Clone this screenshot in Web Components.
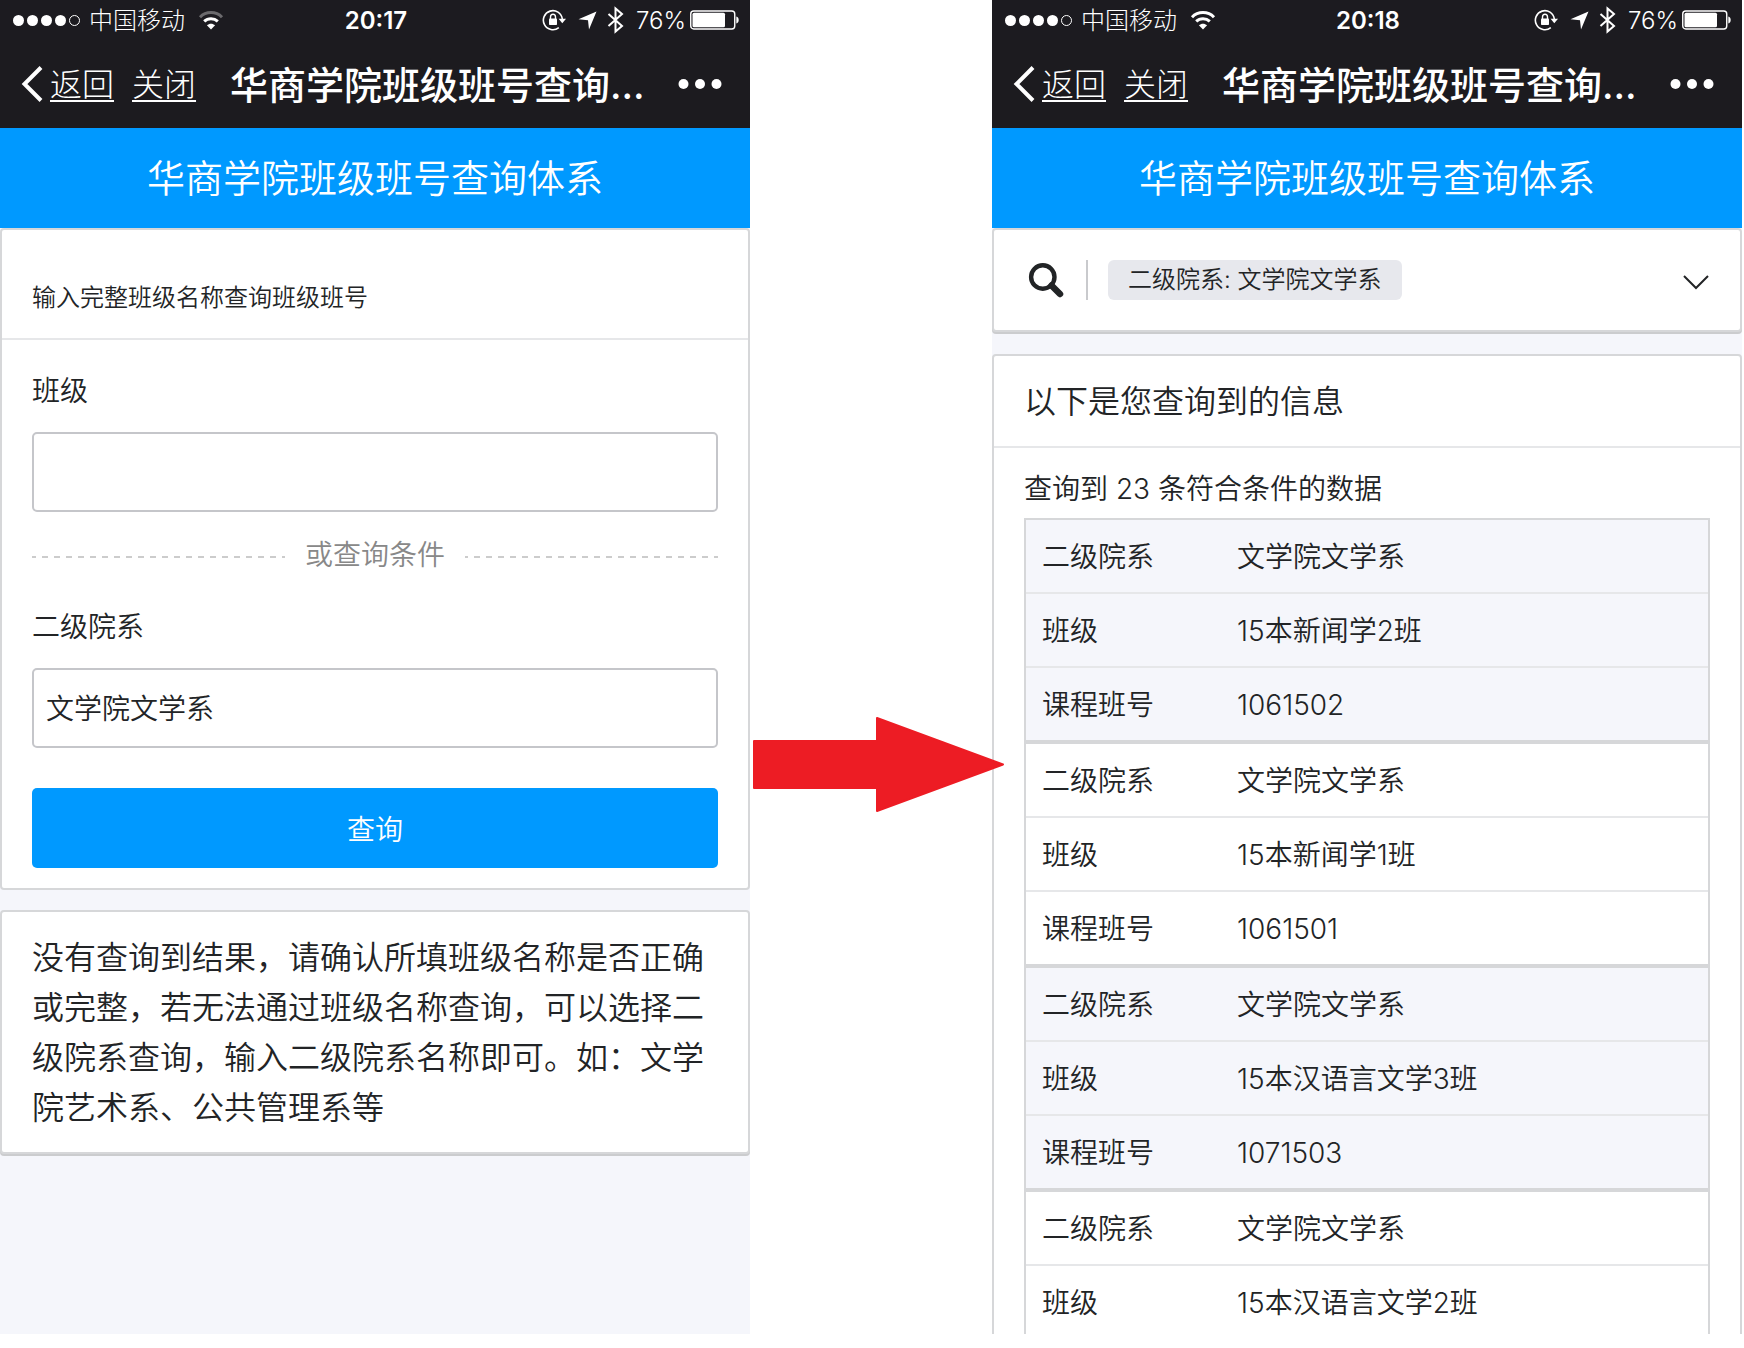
<!DOCTYPE html>
<html lang="zh-CN">
<head>
<meta charset="utf-8">
<title>华商学院班级班号查询体系</title>
<style>
  html, body { height: 100%; }
  body {
    box-sizing: border-box;
    margin: 0;
    padding: 0 2px 14px 0;
    overflow: hidden;
    background: #fff;
    color: #222426;
    font-family: Inter, "Noto Sans CJK SC", sans-serif;
    font-weight: 350;
    --line: #d6d7d9;
    --hair: #e6e7e9;
    --blue: #0099ff;
    --page: #f5f6fb;
  }
</style>
</head>
<body>
<flow-board>
  <phone-screen slot="before">
    <status-bar time="20:17" wifi="weak"></status-bar>
    <nav-bar heading="华商学院班级班号查询…"></nav-bar>
    <page-banner>华商学院班级班号查询体系</page-banner>
    <query-form></query-form>
    <info-card raised><message-text>没有查询到结果，请确认所填班级名称是否正确或完整，若无法通过班级名称查询，可以选择二级院系查询，输入二级院系名称即可。如：文学院艺术系、公共管理系等</message-text></info-card>
  </phone-screen>
  <phone-screen slot="after">
    <status-bar time="20:18"></status-bar>
    <nav-bar heading="华商学院班级班号查询…"></nav-bar>
    <page-banner>华商学院班级班号查询体系</page-banner>
    <info-card raised><filter-bar>二级院系: 文学院文学系</filter-bar></info-card>
    <info-card><result-list></result-list></info-card>
  </phone-screen>
</flow-board>

<script>
const define = (name, markup, fill) => {
  const template = document.createElement('template');
  template.innerHTML = '<style>*{box-sizing:border-box}</style>' + markup;
  customElements.define(name, class extends HTMLElement {
    constructor() {
      super();
      this.attachShadow({ mode: 'open' }).append(template.content.cloneNode(true));
    }
    connectedCallback() { if (fill) fill(this, this.shadowRoot); }
  });
};

define('flow-board', `
<style>
  :host { display: grid; grid-template-columns: 1fr 242px 1fr; height: 100%; }
  .between { position: relative; z-index: 1; }
  .between svg { position: absolute; left: 3px; top: 717px; }
  ::slotted(*) { min-width: 0; }
</style>
<slot name="before"></slot>
<div class="between">
  <svg width="252" height="96" viewBox="0 0 252 96" fill="#ed1c24" stroke="#ed1c24" stroke-width="2" stroke-linejoin="round" aria-hidden="true">
    <path d="M1 24H124V1L250 47.500L124 94V71H1Z"/>
  </svg>
</div>
<slot name="after"></slot>`);

define('phone-screen', `
<style>
  :host { display: block; overflow: hidden; min-height: 0; background: var(--page); }
</style>
<slot></slot>`);

define('status-bar', `
<style>
  :host { display: grid; box-sizing: border-box; grid-template-columns: 1fr auto 1fr; align-items: center; height: 40px;
    padding: 0 10px 0 12px; background: #1c1b20; color: #fff; font-size: 24px; line-height: 36px; }
  svg { display: block; flex: none; }
  span { padding-top: 2px; }
  .left, .right { display: flex; align-items: center; font-weight: 300; }
  .right { justify-content: flex-end; }
  .carrier { margin: 0 13px 0 8px; }
  .time { font-weight: 600; }
  .bt { margin: 0 12px 0 10px; }
  .loc { margin-left: 12px; }
  .battery { margin-left: 4px; }
  :host([wifi="weak"]) .outer { opacity: .35; }
</style>
<div class="left">
  <svg width="69" height="14" viewBox="0 0 69 14" fill="#fff">
    <circle cx="6.500" cy="7.500" r="5.500"/><circle cx="20.500" cy="7.500" r="5.500"/><circle cx="34.500" cy="7.500" r="5.500"/><circle cx="48.500" cy="7.500" r="5.500"/>
    <circle cx="62.500" cy="7.500" r="5" fill="none" stroke="#fff"/>
  </svg>
  <span class="carrier">中国移动</span>
  <svg width="26" height="20" viewBox="0 0 26 20" fill="none" stroke="#fff" stroke-width="3">
    <path class="outer" d="M2 7.200C8 1 18 1 24 7.200"/>
    <path d="M6.200 11.400C10 7.800 16 7.800 19.800 11.400"/>
    <path d="M13 19.500L8.900 15.300C11.300 13.100 14.700 13.100 17.100 15.300Z" fill="#fff" stroke="none"/>
  </svg>
</div>
<span class="time"></span>
<div class="right">
  <svg width="24" height="22" viewBox="0 0 24 22" fill="none" stroke="#fff">
    <path d="M16.800 18.600A9.500 9.500 0 1 1 20.300 10" stroke-width="1.600"/>
    <path d="M16.600 9.800H24L20.300 14.200Z" fill="#fff" stroke="none"/>
    <rect x="7" y="9.500" width="8" height="6.500" rx=".8" fill="#fff" stroke="none"/>
    <path d="M8.500 10V8A2.500 2.800 0 0 1 13.500 8V10" stroke-width="1.400"/>
  </svg>
  <svg class="loc" width="19" height="19" viewBox="0 0 19 19" fill="#fff"><path d="M18.500 .5L11 18.500L10 9.200L.5 8.200Z"/></svg>
  <svg class="bt" width="17" height="28" viewBox="0 0 17 28" fill="none" stroke="#fff" stroke-width="2"><path d="M1.500 8L15 20L8.500 25.500V2.500L15 8L1.500 20"/></svg>
  <span>76%</span>
  <svg class="battery" width="50" height="20" viewBox="0 0 50 20" fill="#fff">
    <rect x=".75" y="1" width="44" height="18" rx="3" fill="none" stroke="#fff" stroke-width="1.400"/>
    <rect x="2.500" y="2.800" width="32.500" height="14.500" rx="1.500"/>
    <path d="M46.300 6.500C49.500 7 49.500 13 46.300 13.500Z"/>
  </svg>
</div>`, (el, root) => { root.querySelector('.time').textContent = el.getAttribute('time'); });

define('nav-bar', `
<style>
  :host { display: flex; box-sizing: border-box; align-items: center; height: 88px; padding: 0 28px 0 21px; background: #1c1b1f; color: #fff; }
  a { padding-top: 2px; color: inherit; font-size: 32px; line-height: 48px; font-weight: 300; text-decoration: underline;
    text-decoration-thickness: 2px; text-underline-offset: 4px; white-space: nowrap; }
  .back { margin: 0 18px 0 7px; }
  h1 { flex: 1; margin: 0 0 0 34px; padding-top: 2px; font-size: 38px; line-height: 56px; font-weight: 500; white-space: nowrap; }
  button { display: block; padding: 0; border: 0; background: none; color: inherit; }
  svg { display: block; flex: none; }
</style>
<svg width="22" height="38" viewBox="0 0 22 38" fill="none" stroke="#fff" stroke-width="4"><path d="M20 2.500L3.500 19L20 35.500"/></svg>
<a class="back" href="#back">返回</a>
<a href="#close">关闭</a>
<h1></h1>
<button type="button" aria-label="更多"><svg width="44" height="12" viewBox="0 0 44 12" fill="#fff"><circle cx="5.500" cy="6" r="5"/><circle cx="22" cy="6" r="5"/><circle cx="38.500" cy="6" r="5"/></svg></button>`,
(el, root) => { root.querySelector('h1').textContent = el.getAttribute('heading'); });

define('page-banner', `
<style>
  :host { display: block; background: var(--blue); color: #fff; font-size: 38px; line-height: 100px; text-align: center; }
</style>
<slot></slot>`);

define('info-card', `
<style>
  :host { display: block; box-sizing: border-box; margin-bottom: 20px; border: 2px solid var(--line); border-radius: 4px; background: #fff; }
  :host([raised]) { margin-bottom: 22px; box-shadow: 0 2px 0 #cbccce; }
</style>
<slot></slot>`);

define('message-text', `
<style>
  :host { display: block; padding: 21px 30px 19px; font-size: 32px; line-height: 50px; }
</style>
<slot></slot>`);

define('query-form', `
<style>
  :host { display: block; }
  header { padding: 50px 30px 22px; border-bottom: 2px solid var(--hair); font-size: 24px; line-height: 36px; }
  form { display: flex; flex-direction: column; padding: 31px 30px 20px; font-size: 28px; }
  label { line-height: 40px; margin-bottom: 21px; }
  input { width: 100%; height: 80px; padding: 0 12px 2px; border: 2px solid #c5c6ca; border-radius: 5px; background: #fff;
    color: inherit; font: inherit; outline: 0; }
  .or { display: flex; align-items: center; gap: 20px; height: 40px; margin: 25px 0 30px; color: #888; }
  .or span { align-self: flex-start; line-height: 36px; }
  .or i { flex: 1; height: 2px; background: repeating-linear-gradient(var(--dir), #ccc 0 4px, transparent 4px 10px, #ccc 10px 12px); }
  .or i:first-child { --dir: 90deg; }
  .or i:last-child { --dir: 270deg; }
  button { height: 80px; margin-top: 40px; padding: 4px 0 0; border: 0; border-radius: 5px; background: var(--blue); color: #fff; font: inherit; line-height: 76px; }
</style>
<info-card>
  <header>输入完整班级名称查询班级班号</header>
  <form>
    <label for="class">班级</label>
    <input id="class" type="text">
    <div class="or"><i></i><span>或查询条件</span><i></i></div>
    <label for="dept">二级院系</label>
    <input id="dept" type="text" value="文学院文学系">
    <button type="button">查询</button>
  </form>
</info-card>`);

define('filter-bar', `
<style>
  :host { display: flex; align-items: center; height: 100px; padding: 0 30px; }
  button { display: block; padding: 0; border: 0; background: none; color: #222426; }
  svg { display: block; }
  .search { margin-left: 4px; }
  .rule { width: 2px; height: 40px; margin: 0 20px 0 22px; background: #c9cacd; }
  .chip { padding: 0 20px; border-radius: 6px; background: #e7e8ed; font-size: 24px; line-height: 40px; white-space: nowrap; }
  .more { margin-left: auto; padding-top: 4px; }
</style>
<button class="search" type="button" aria-label="搜索">
  <svg width="36" height="36" viewBox="0 0 36 36" fill="none" stroke="currentColor"><circle cx="14.800" cy="15" r="11.700" stroke-width="4.400"/><path d="M23.500 23.500L32 32" stroke-width="6.500" stroke-linecap="round"/></svg>
</button>
<span class="rule"></span>
<span class="chip"><slot></slot></span>
<button class="more" type="button" aria-label="展开"><svg width="28" height="16" viewBox="0 0 28 16" fill="none" stroke="currentColor" stroke-width="2"><path d="M2 2L14 14L26 2"/></svg></button>`);

const results = [
  [['二级院系', '文学院文学系'], ['班级', '15本新闻学2班'], ['课程班号', '1061502']],
  [['二级院系', '文学院文学系'], ['班级', '15本新闻学1班'], ['课程班号', '1061501']],
  [['二级院系', '文学院文学系'], ['班级', '15本汉语言文学3班'], ['课程班号', '1071503']],
  [['二级院系', '文学院文学系'], ['班级', '15本汉语言文学2班']]
];

define('result-list', `
<style>
  :host { display: block; font-size: 28px; }
  h2 { margin: 0; padding: 21px 30px 19px; border-bottom: 2px solid var(--hair); font-size: 32px; line-height: 50px; font-weight: inherit; }
  .body { padding: 21px 30px; }
  p { margin: 0 0 9px; line-height: 40px; }
  table { width: 100%; border: 2px solid var(--line); border-spacing: 0; table-layout: fixed; }
  th, td { height: 74px; padding: 2px 0 0; border-bottom: 2px solid var(--hair); font-weight: inherit; text-align: left; line-height: 40px; }
  th { width: 211px; padding-left: 16px; }
  tr:nth-child(3) > * { height: 76px; border-bottom: 4px solid var(--line); }
  tbody:nth-child(odd) { background: var(--page); }
</style>
<h2>以下是您查询到的信息</h2>
<div class="body">
  <p>查询到 23 条符合条件的数据</p>
  <table></table>
</div>`, (el, root) => {
  root.querySelector('table').innerHTML = results.map(group =>
    '<tbody>' + group.map(([name, value]) => `<tr><th scope="row">${name}</th><td>${value}</td></tr>`).join('') + '</tbody>'
  ).join('');
});
</script>
</body>
</html>
